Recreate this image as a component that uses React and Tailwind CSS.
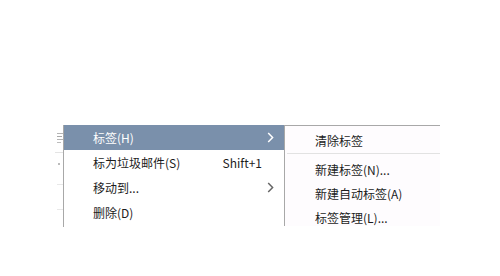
import React from "react";

const Chevron = ({ className }) => (
  <svg width="7" height="11" viewBox="0 0 7 11" className={className} fill="none">
    <path d="M1.2 1 L5.6 5.5 L1.2 10" stroke="currentColor" strokeWidth="1.5" />
  </svg>
);

const mainItems = [
  { label: "标签(H)", active: true, arrow: true },
  { label: "标为垃圾邮件(S)", shortcut: "Shift+1" },
  { label: "移动到...", arrow: true },
  { label: "删除(D)" },
];

const subItems = ["新建标签(N)...", "新建自动标签(A)", "标签管理(L)..."];

export default function App() {
  return (
    <div
      className="w-[500px] h-[276px] bg-white overflow-hidden pt-[125px] text-[12px] text-[#1c1c1c]"
      style={{ fontFamily: '"Noto Sans CJK SC", "Noto Sans", sans-serif' }}
    >
      <div className="flex items-start">
        {/* 背景里被菜单挡住的内容 */}
        <div className="w-[63px] h-[102px] flex flex-col items-end overflow-hidden">
          <div className="h-[25px] w-[6px] flex flex-col justify-center gap-[2px]">
            <div className="w-[6px] h-[1px] bg-[#b4b4b4]" />
            <div className="w-[5px] h-[1px] bg-[#a8a8a8]" />
            <div className="w-[6px] h-[1px] bg-[#b4b4b4]" />
            <div className="w-[4px] h-[1px] bg-[#bcbcbc]" />
          </div>
          <div className="w-[8px] border-t border-[#e4e4e4] mt-[2px]" />
          <div className="w-[2px] h-[2px] bg-[#bbb] mt-[10px] mr-[3px]" />
          <div className="w-[6px] border-t border-[#e8e8e8] mt-[19px]" />
          <div className="w-[6px] border-t border-[#e8e8e8] mt-[24px]" />
        </div>

        {/* 主菜单 */}
        <div className="w-[221px] border-l border-[#a8a8a8] bg-white pb-[2px]">
          {mainItems.map((it) => (
            <div
              key={it.label}
              className={
                "h-[25px] flex items-center pl-[29px] pr-[10px] " +
                (it.active ? "bg-[#7a90ab] text-white" : "")
              }
            >
              <span className="flex-1 whitespace-nowrap">{it.label}</span>
              {it.shortcut && <span className="mr-[12px]">{it.shortcut}</span>}
              {it.arrow && (
                <Chevron className={it.active ? "text-white" : "text-[#666]"} />
              )}
            </div>
          ))}
        </div>

        {/* 子菜单 */}
        <div className="w-[156px] h-[101px] border-l border-t border-[#a8a8a8] bg-[#fefcfe] pt-[3px] overflow-hidden">
          <div className="h-[24px] flex items-center pl-[30px] whitespace-nowrap">清除标签</div>
          <div className="border-t border-[#e2e2e2] ml-[2px]" />
          <div className="pt-[4px]">
            {subItems.map((s) => (
              <div key={s} className="h-[24px] flex items-center pl-[30px] whitespace-nowrap">
                {s}
              </div>
            ))}
          </div>
        </div>
      </div>
    </div>
  );
}
